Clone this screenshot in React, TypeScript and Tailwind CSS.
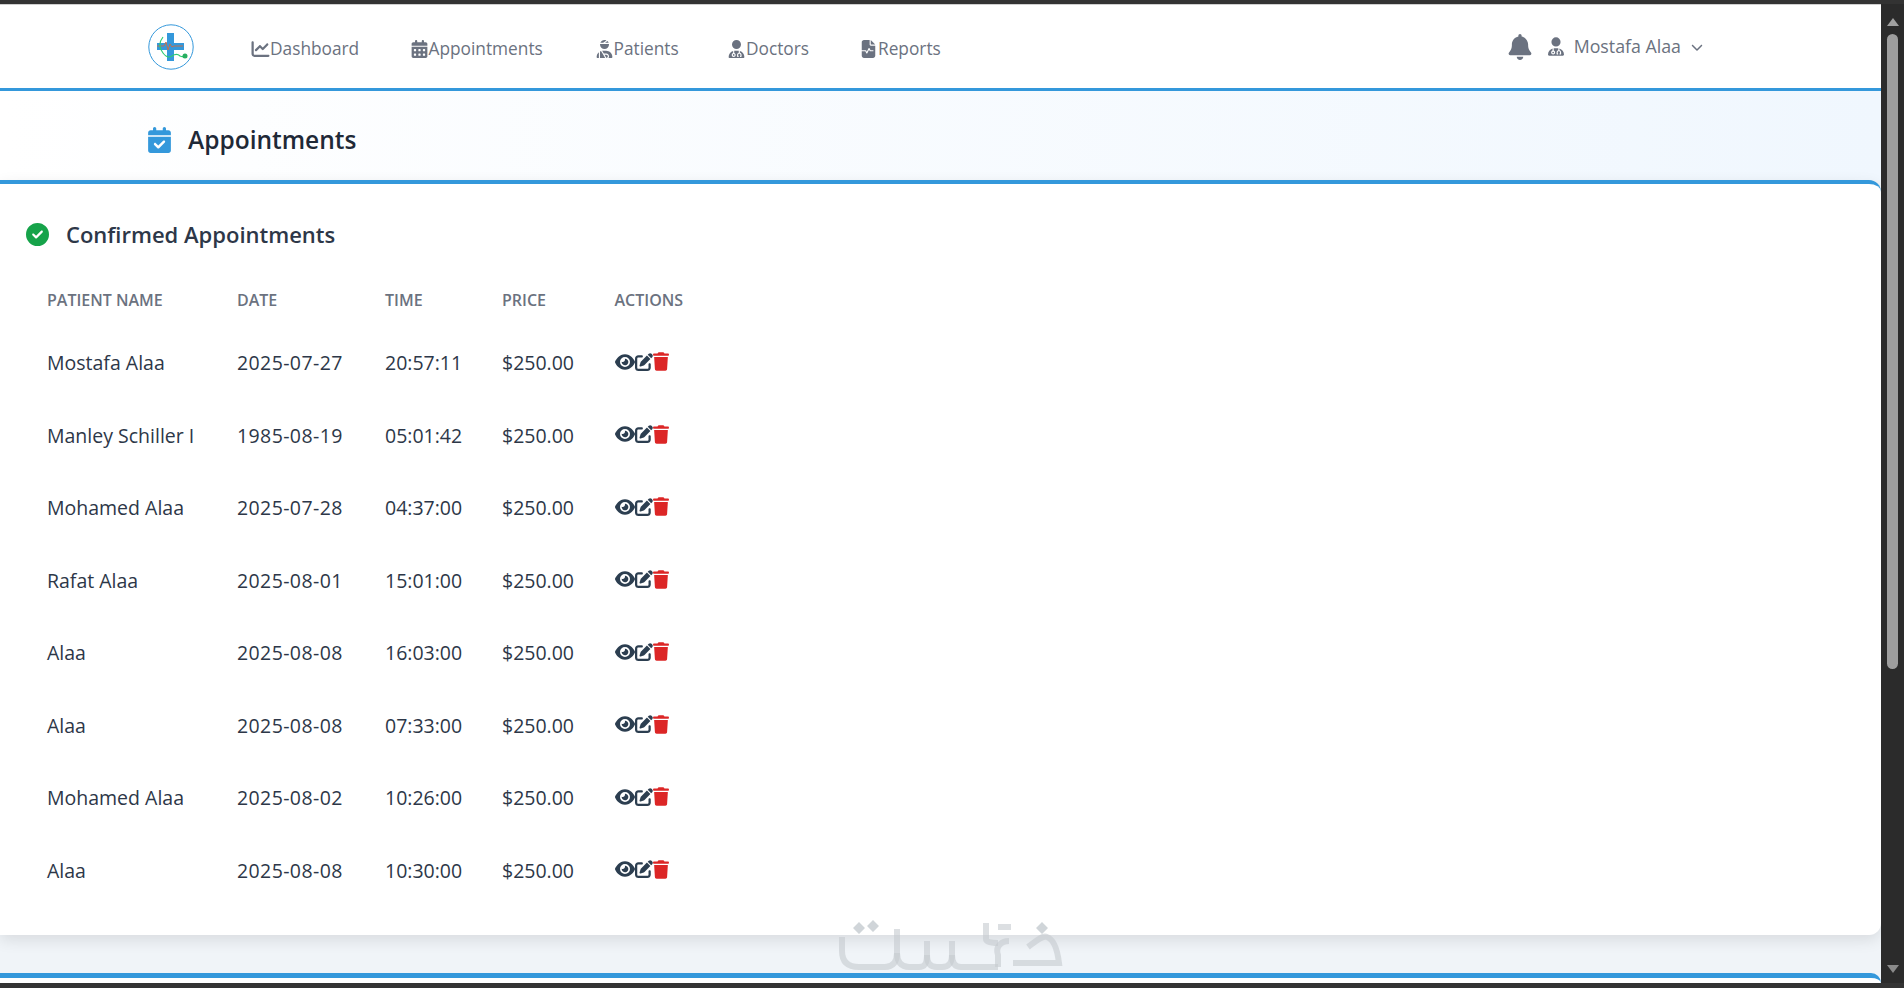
import { FaBell, FaCalendarCheck, FaCalendarDays, FaChartLine, FaChevronDown, FaCircleCheck, FaEye, FaFileWaveform, FaPenToSquare, FaTrash, FaUserDoctor, FaUserInjured } from 'react-icons/fa6';

const navItems = [
  { label: 'Dashboard', icon: FaChartLine, width: 'w-[158.500px]' },
  { label: 'Appointments', icon: FaCalendarDays, width: 'w-[185px]' },
  { label: 'Patients', icon: FaUserInjured, width: 'w-[132.500px]' },
  { label: 'Doctors', icon: FaUserDoctor, width: 'w-[132px]' },
  { label: 'Reports', icon: FaFileWaveform, width: 'w-[100px]' },
];

const rows = [
  ['Mostafa Alaa', '2025-07-27', '20:57:11'],
  ['Manley Schiller I', '1985-08-19', '05:01:42'],
  ['Mohamed Alaa', '2025-07-28', '04:37:00'],
  ['Rafat Alaa', '2025-08-01', '15:01:00'],
  ['Alaa', '2025-08-08', '16:03:00'],
  ['Alaa', '2025-08-08', '07:33:00'],
  ['Mohamed Alaa', '2025-08-02', '10:26:00'],
  ['Alaa', '2025-08-08', '10:30:00'],
];

const Logo = () => (
  <svg viewBox="0 0 46 46" className="w-[46px] h-[46px]">
    <circle cx="23" cy="23" r="22.2" fill="#fff" stroke="#3498db" strokeWidth="1" />
    <path d="M19 9h7v10h10v7H26v11h-7V26H9v-7h10z" fill="#3498db" />
    <path d="M9 22h7l2-4 2 8 2-6 2 3 2-1h9" fill="none" stroke="#c0704f" strokeWidth="1" />
    <path d="M15 13c-4 5-4 11 0 16 3 4 6 5 9 3 3-2 6-2 8 0 2 1 3 1 4 0" fill="none" stroke="#2ecc71" strokeWidth="1.200" />
    <circle cx="37" cy="32" r="2.500" fill="#27ae60" />
  </svg>
);

// khamsat watermark sitting over the bottom of the page
const Watermark = () => (
  <svg viewBox="0 0 240 60" className="absolute left-[830px] top-[911px] w-[240px] h-[60px] pointer-events-none" fill="none" stroke="#c4cacf" strokeOpacity="0.6" strokeWidth="6">
    <path d="M12 22v14c0 11 6 16 17 16h26c8 0 12-5 12-14V14" />
    <path d="M67 38c0 9 4 14 12 14h10c6 0 8-4 8-12V26" />
    <path d="M97 40c0 8 3 12 10 12h5c8 0 10-5 10-13V26" />
    <path d="M122 40c0 8 3 12 9 12h37" />
    <path d="M156 8v16c0 3 5 4 12 4" />
    <path d="M168 12h13" />
    <path d="M179 26c-8 0-14 6-11 14v12" />
    <path d="M198 32c8-6 14-12 19-10 6 2 10 10 12 26h-46" />
    <path d="M23 13l6-6 6 6-6 6zM37 11l6-6 6 6-6 6zM206 13l6-6 6 6-6 6z" fill="#c4cacf" fillOpacity="0.8" stroke="none" />
  </svg>
);

const App = () => {
  return (
    <div className="h-[988px] overflow-hidden flex flex-col bg-[#333333] pt-[4px] pb-[5px] font-['Open_Sans','Noto_Sans',sans-serif]">
      <div className="flex-1 min-h-0 flex">
        <div className="relative flex-1 min-w-0 flex flex-col bg-[#f0f4f8] overflow-hidden">
          <nav className="h-[87px] shrink-0 flex items-center pl-[148px] pr-[178px] bg-white border-t border-[#cfcfcf] border-b-[3px] border-b-[#3498db]">
            <Logo />
            <div className="flex items-center ml-[57px]">
              {navItems.map((item) => (
                <a key={item.label} className={`${item.width} flex items-center text-[#6b7280] text-[17.300px] mt-[4px]`}>
                  <item.icon className="w-[19px] h-[18px] shrink-0" />
                  <span>{item.label}</span>
                </a>
              ))}
            </div>
            <div className="ml-auto flex items-center text-[#6b7280]">
              <FaBell className="w-[24px] h-[26px]" />
              <FaUserDoctor className="w-[16px] h-[19px] ml-[16px]" />
              <span className="ml-[10px] text-[17.800px]">Mostafa Alaa</span>
              <FaChevronDown className="w-[12px] h-[12px] ml-[10px]" />
            </div>
          </nav>

          <header className="h-[89px] shrink-0 flex items-center pl-[148px] pt-[9px] bg-gradient-to-r from-white to-[#f0f7fe]">
            <FaCalendarCheck className="w-[23px] h-[26px] text-[#3498db]" />
            <h1 className="ml-[17px] text-[24.500px] font-semibold text-[#1f2937]">Appointments</h1>
          </header>

          <section className="h-[755px] shrink-0 bg-white border-t-[4px] border-t-[#3498db] rounded-r-[12px] shadow-[0_5px_15px_rgba(0,0,0,0.1)] pl-[25px] pt-[34px]">
            <div className="flex items-center pl-[1px]">
              <FaCircleCheck className="w-[23px] h-[23px] text-[#16a34a]" />
              <h2 className="ml-[17px] text-[22px] font-semibold text-[#2d3748]">Confirmed Appointments</h2>
            </div>
            <table className="table-fixed w-[750px] mt-[22px] border-collapse">
              <thead>
                <tr className="h-[53.500px] text-left text-[16px] text-[#6b7280] uppercase">
                  <th className="w-[190px] pl-[22px] font-semibold">Patient Name</th>
                  <th className="w-[148px] pl-[22px] font-semibold">Date</th>
                  <th className="w-[117px] pl-[22px] font-semibold">Time</th>
                  <th className="w-[112.500px] pl-[22px] font-semibold">Price</th>
                  <th className="pl-[22px] font-semibold">Actions</th>
                </tr>
              </thead>
              <tbody>
                {rows.map((row, index) => (
                  <tr key={`row-${index}`} className="h-[72.500px] text-[19.500px] text-[#2d3748]">
                    <td className="pl-[22px]">{row[0]}</td>
                    <td className="pl-[22px] tracking-[0.400px]">{row[1]}</td>
                    <td className="pl-[22px]">{row[2]}</td>
                    <td className="pl-[22px]">$250.00</td>
                    <td className="pl-[22px]">
                      <div className="flex items-center mb-[2px]">
                        <FaEye className="w-[20px] h-[18px] text-[#2c3e50]" />
                        <FaPenToSquare className="w-[18px] h-[18px] text-[#2c3e50]" />
                        <FaTrash className="w-[16px] h-[19px] text-[#dc2626]" />
                      </div>
                    </td>
                  </tr>
                ))}
              </tbody>
            </table>
          </section>

          <div className="flex-1" />
          <div className="h-[10px] shrink-0 bg-white border-t-[5px] border-t-[#3498db] rounded-tr-[12px]" />
          <Watermark />
        </div>

        <aside className="w-[23px] shrink-0 flex flex-col items-center bg-[#2b2b2b] pt-[14px] pb-[10px]">
          <div className="w-0 h-0 border-x-[6px] border-x-transparent border-b-[8px] border-b-[#a0a0a0]" />
          <div className="w-[11px] h-[635px] rounded-full bg-[#9e9e9e] mt-[8px]" />
          <div className="mt-auto w-0 h-0 border-x-[6px] border-x-transparent border-t-[8px] border-t-[#8a8a8a]" />
        </aside>
      </div>
    </div>
  );
};

export default App;
